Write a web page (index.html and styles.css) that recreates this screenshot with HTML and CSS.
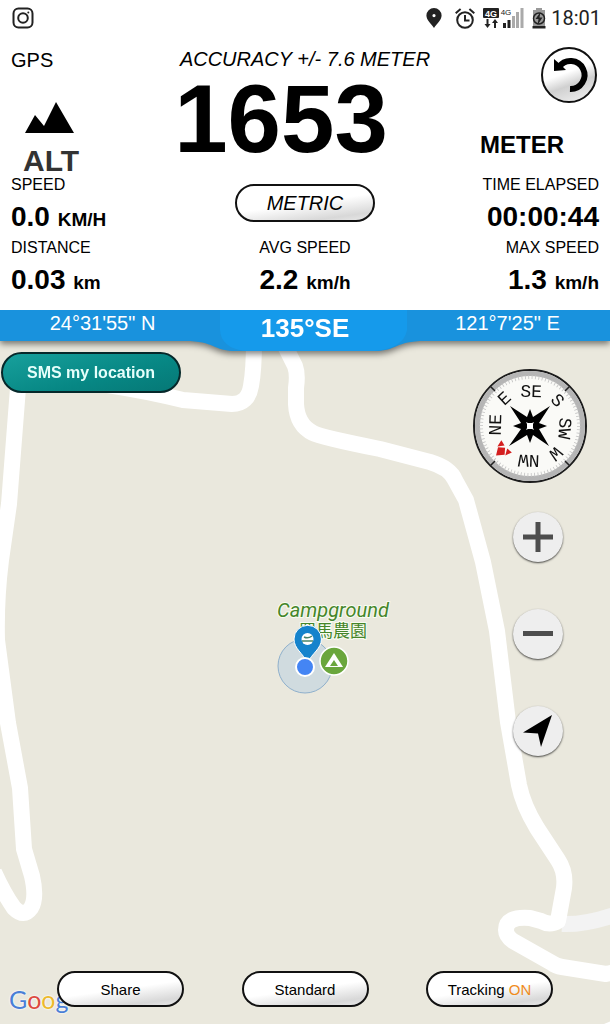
FILE: index.html
```html
<!DOCTYPE html>
<html lang="en">
<head>
  <meta charset="UTF-8">
  <meta name="viewport" content="width=device-width, initial-scale=1">
  <title>GPS Altimeter</title>
  <link rel="stylesheet" href="styles.css">
</head>
<body>

  <!-- Status bar -->
  <header class="status-bar">
    <svg width="22" height="22" viewBox="0 0 22 22" fill="none" stroke="#222" stroke-width="2">
      <rect x="1.5" y="1.5" width="19" height="19" rx="5"/>
      <circle cx="11" cy="11" r="4.8"/>
      <circle cx="16.3" cy="5.6" r="1" fill="#222" stroke="none"/>
    </svg>
    <div class="status-icons">
      <svg width="16" height="20" viewBox="0 0 16 20">
        <path fill="#222" fill-rule="evenodd" d="M8 0a7.6 7.6 0 0 0-7.6 7.6C.4 12 5 15.500 8 20c3-4.500 7.600-8 7.600-12.400A7.600 7.600 0 0 0 8 0zm0 6a1.600 1.600 0 1 1 0 3.200A1.600 1.600 0 0 1 8 6z"/>
      </svg>
      <svg width="20" height="21" viewBox="0 0 20 21" fill="none" stroke="#222" stroke-width="2">
        <circle cx="10" cy="12" r="7.800"/>
        <path d="M10 7v5.500h4.500M.7 5.200L5.600 1M19.300 5.200L14.400 1"/>
      </svg>
      <svg width="41" height="21" viewBox="0 0 41 21">
        <rect width="16" height="10" rx="1" fill="#222"/>
        <text x="8" y="9" class="net-label" fill="#fff">4G</text>
        <path fill="#222" d="M3.500 11h2v5h2l-3 4-3-4h2zM11 20h2v-5h2l-3-4-3 4h2z"/>
        <text x="23" y="7" class="net-small" fill="#222">4G</text>
        <path fill="#222" d="M20 15h3v5h-3zM24.500 12h3v8h-3z"/>
        <path fill="#aaa" d="M29 8h3v12h-3zM33 4h3v16h-3zM37.500 0h3v20h-3z"/>
      </svg>
      <svg width="14" height="21" viewBox="0 0 14 21">
        <path fill="#999" d="M4 0h6v2h3v17H1V2h3z"/>
        <path fill="#222" d="M.5 18h13v2.500H.5z"/>
        <circle cx="7" cy="10.500" r="5.500" fill="none" stroke="#222" stroke-width="1.500"/>
        <path fill="#222" d="M8.500 4L3.500 11h3L5.500 17l5-7.500h-3z"/>
      </svg>
      <time>18:01</time>
    </div>
  </header>

  <main>
    <!-- Altitude -->
    <section class="altitude">
      <div class="altitude-source">
        <span class="caption">GPS</span>
        <svg class="mountain" width="50" height="31" viewBox="0 0 50 31">
          <path d="M0 31L10 13l9 11L31 0l18 31z"/>
        </svg>
        <strong class="alt-label">ALT</strong>
      </div>
      <div class="altitude-value">
        <em class="caption">ACCURACY +/- 7.6 METER</em>
        <strong class="big-number">1653</strong>
      </div>
      <div class="altitude-unit">
        <button type="button" class="reset-btn" aria-label="Reset">
          <svg width="52" height="52" viewBox="2 2 52 52">
            <path d="M18 20A14 14 0 1 1 29 42" fill="none" stroke="#000" stroke-width="6"/>
            <path d="M13 12v12l12-1-5-5z"/>
          </svg>
        </button>
        <strong class="unit-label">METER</strong>
      </div>
    </section>

    <!-- Trip stats -->
    <section class="stats">
      <div class="stat">
        <span class="stat-label">SPEED</span>
        <strong class="stat-value">0.0 <small>KM/H</small></strong>
      </div>
      <button type="button" class="pill metric-btn">METRIC</button>
      <div class="stat right">
        <span class="stat-label">TIME ELAPSED</span>
        <strong class="stat-value">00:00:44</strong>
      </div>
      <div class="stat">
        <span class="stat-label">DISTANCE</span>
        <strong class="stat-value">0.03 <small>km</small></strong>
      </div>
      <div class="stat center">
        <span class="stat-label">AVG SPEED</span>
        <strong class="stat-value">2.2 <small>km/h</small></strong>
      </div>
      <div class="stat right">
        <span class="stat-label">MAX SPEED</span>
        <strong class="stat-value">1.3 <small>km/h</small></strong>
      </div>
    </section>

    <!-- Map -->
    <section class="map">
      <svg class="map-canvas" viewBox="0 310 610 714" preserveAspectRatio="xMidYMid slice">
        <path class="road minor" d="M562 924q22 1 52-9"/>
        <g class="road">
          <path d="M19 375L9 504L1 560Q-4 600-3 640L8 723L20 788L24 849L32 876Q37 898 31 908Q24 918 14 908Q4 894-6 872"/>
          <path d="M19 375Q110 382 183 400L232 404Q248 404 251 386Q254 370 254 340"/>
          <path d="M282 340L295 366Q298 374 296 388V404Q297 425 313 433Q320 437 380 449L430 462Q450 468 455 480L466 500L483 562L497 631L508 722L519 785Q523 805 537 828L558 860Q566 872 564 888L558 921Q550 926 541 921L530 918Q506 916 506 930Q506 936 513 941L552 963Q556 966 562 967L606 974L620 971"/>
          <path d="M596 1036L620 1026"/>
        </g>
        <circle cx="305" cy="666" r="27" class="accuracy"/>
        <text x="333" y="617" class="place">Campground</text>
        <text x="333" y="637" class="place-cjk">羅馬農園</text>
        <circle cx="334" cy="661" r="14" fill="#6aa63c" stroke="#fff" stroke-width="1.500"/>
        <path d="M334 653l9 14h-18z" fill="#fff"/>
        <path d="M334 660l4 6h-8z" fill="#6aa63c"/>
        <path d="M307.500 663C303 653 294 649 294 639a13.700 13.700 0 0 1 27.400 0C321.400 649 312 653 307.500 663z" fill="#1583cc" stroke="#fff" stroke-width="1"/>
        <circle cx="307.500" cy="639" r="6" fill="#fff"/>
        <path d="M304 637q4 2 8-1M302 641h11" fill="none" stroke="#49856a" stroke-width="1.500"/>
        <circle cx="305" cy="667" r="9" fill="#4485f4" stroke="#fff" stroke-width="2"/>
      </svg>

      <div class="heading-bar">
        <svg class="heading-tab" width="240" height="42" viewBox="0 0 240 42">
          <path fill="#1992dd" d="M0 0h240v31c-30 0-28 10-50 10H50C28 41 30 31 0 31z"/>
          <path fill="#159aeb" d="M35 0h187v20q-3 18-32 21H60Q36 38 35 20z"/>
        </svg>
        <span class="coord">24°31'55" N</span>
        <strong class="heading">135°SE</strong>
        <span class="coord">121°7'25" E</span>
      </div>

      <div class="map-body">
        <button type="button" class="sms-btn">SMS my location</button>
        <div class="map-tools">
          <svg class="compass" width="114" height="114" viewBox="-57 -57 114 114">
            <circle r="56" fill="#fafaf7" stroke="#1c1c1c" stroke-width="2"/>
            <circle r="52.500" fill="none" stroke="#b5b5b5" stroke-width="5"/>
            <circle r="49" fill="none" stroke="#c4c4c4" stroke-width="4" pathLength="360" stroke-dasharray="1 3"/>
            <path stroke="#222" stroke-width="1.500" d="M-40-40l5 5M40-40l-5 5M40 40l-5-5M-40 40l5-5"/>
            <g class="compass-text">
              <text y="-29" transform="rotate(2)">SE</text>
              <text y="-32" transform="rotate(47)">S</text>
              <text y="-29" transform="rotate(94)">SW</text>
              <text y="-32" transform="rotate(137)">W</text>
              <text y="-29" transform="rotate(182)">NW</text>
              <text y="-29" transform="rotate(272)">NE</text>
              <text y="-32" transform="rotate(317)">E</text>
            </g>
            <g transform="rotate(229)" fill="#d41f1f">
              <path d="M0-45l5 7-5 5-5-5zM-8-31l2-7 4 6zM8-31l-2-7-4 6z"/>
            </g>
            <path d="M0-17L3-9L20-20L9-3L17 0L9 3L19 20L3 9L0 17L-3 9L-21 20L-9 3L-17 0L-9-3L-20-20L-3-9z"/>
            <path fill="#fff" d="M-4-4l2 1h4l2-1-1 2v4l1 2-2-1h-4l-2 1 1-2v-4z"/>
          </svg>
          <div class="round-btns">
            <button type="button" class="round-btn" aria-label="Zoom in">
              <svg width="30" height="30" viewBox="0 0 30 30"><path fill="#4d4d4d" d="M12.500 0h5v12.500H30v5H17.500V30h-5V17.500H0v-5h12.500z"/></svg>
            </button>
            <button type="button" class="round-btn" aria-label="Zoom out">
              <svg width="30" height="30" viewBox="0 0 30 30"><path fill="#4d4d4d" d="M0 12h30v5H0z"/></svg>
            </button>
            <button type="button" class="round-btn" aria-label="My position">
              <svg width="30" height="34" viewBox="0 0 30 34"><path d="M29 1L18 33l-3-13.500L0 18.500z"/></svg>
            </button>
          </div>
        </div>
      </div>

      <span class="google" aria-label="Google"><i class="b">G</i><i class="r">o</i><i class="y">o</i><i class="b">g</i></span>
      <nav class="map-actions">
        <button type="button" class="pill">Share</button>
        <button type="button" class="pill">Standard</button>
        <button type="button" class="pill">Tracking <span class="on">ON</span></button>
      </nav>
    </section>
  </main>

</body>
</html>
```
FILE: styles.css
```css
* {
  box-sizing: border-box;
}

body {
  margin: 0;
  min-height: 100vh;
  display: flex;
  flex-direction: column;
  font-family: "Liberation Sans", Arial, sans-serif;
  background: #fff;
  color: #000;
}

main {
  flex: 1;
  display: flex;
  flex-direction: column;
}

button {
  font-family: inherit;
  padding: 0;
  cursor: pointer;
}

svg {
  display: block;
}

/* Status bar */
.status-bar {
  display: flex;
  justify-content: space-between;
  align-items: center;
  height: 36px;
  padding: 0 9px 0 12px;
}

.status-icons {
  display: flex;
  align-items: center;
  gap: 8px;
}

.status-icons svg:first-child {
  margin-right: 5px;
}

.status-icons time {
  font: 20px/24px Roboto, sans-serif;
  color: #222;
  margin-left: -3px;
}

.net-label {
  font: bold 9px "Liberation Sans", sans-serif;
  text-anchor: middle;
}

.net-small {
  font: 8px "Liberation Sans", sans-serif;
  text-anchor: middle;
}

/* Altitude */
.altitude {
  display: grid;
  grid-template-columns: 1fr auto 1fr;
  padding: 0 11px;
}

.caption {
  font-size: 20px;
  line-height: 20px;
}

.altitude-source {
  display: flex;
  flex-direction: column;
  align-items: flex-start;
  padding-top: 14px;
}

.mountain {
  margin: 32px 0 15px 14px;
}

.alt-label {
  margin-left: 12px;
  font-size: 30px;
  line-height: 26px;
  color: #333;
}

.altitude-value {
  display: flex;
  flex-direction: column;
  align-items: center;
  padding-top: 13px;
}

.big-number {
  padding-right: 48px;
  font-size: 96px;
  line-height: 100px;
}

.altitude-unit {
  display: flex;
  flex-direction: column;
  align-items: flex-end;
  padding-top: 11px;
}

.reset-btn {
  width: 56px;
  height: 56px;
  margin-right: 2px;
  border: 2px solid #111;
  border-radius: 50%;
  background: linear-gradient(160deg, #fff 45%, #d0d0d0 65%, #f4f4f4);
}

.unit-label {
  margin: 28px 35px 0 0;
  font-size: 24px;
  line-height: 28px;
}

/* Trip stats */
.stats {
  display: grid;
  grid-template-columns: 1fr auto 1fr;
  padding: 1px 11px 9px;
}

.stat {
  display: flex;
  flex-direction: column;
}

.stat.center {
  align-items: center;
}

.stat.right {
  align-items: flex-end;
}

.stat-label {
  font-size: 16px;
  line-height: 20px;
}

.stat-value {
  font-size: 28px;
  line-height: 43px;
}

.stat-value small {
  font-size: 19px;
  line-height: 1;
}

.pill {
  width: 127px;
  height: 36px;
  border: 2px solid #111;
  border-radius: 18px;
  background: linear-gradient(172deg, #fff 50%, #d8d8d8 85%, #e8e8e8);
  color: #000;
  font-size: 15px;
}

.metric-btn {
  width: 140px;
  height: 38px;
  margin-top: 9px;
  font-size: 20px;
  font-style: italic;
  border-radius: 19px;
}

/* Map */
.map {
  position: relative;
  flex: 1;
  display: flex;
  flex-direction: column;
  overflow: hidden;
  background: #eae8dd;
}

.map-canvas {
  position: absolute;
  inset: 0;
  width: 100%;
  height: 100%;
}

.road {
  fill: none;
  stroke: #fff;
  stroke-width: 16px;
  stroke-linejoin: round;
}

.road.minor {
  stroke: #f3f3f3;
}

.accuracy {
  fill: rgba(160, 195, 225, 0.35);
  stroke: #8fb0cc;
}

.place,
.place-cjk {
  text-anchor: middle;
  fill: #45852a;
  stroke: #f8fcf0;
  stroke-width: 2px;
  paint-order: stroke;
}

.place {
  font: italic 20px Roboto, sans-serif;
}

.place-cjk {
  font: 17px "Noto Sans CJK TC", sans-serif;
}

/* Heading and coordinates */
.heading-bar {
  position: relative;
  display: grid;
  grid-template-columns: 1fr 200px 1fr;
  justify-items: center;
  height: 42px;
  background: linear-gradient(#1992dd, #1992dd) top / 100% 31px no-repeat;
  color: #fff;
  filter: drop-shadow(0 3px 3px rgba(0, 0, 0, 0.5));
}

.heading-tab {
  position: absolute;
  top: 0;
  left: 50%;
  margin-left: -120px;
}

.coord {
  font-size: 20px;
  line-height: 26px;
}

.heading {
  position: relative;
  font-size: 26px;
  line-height: 36px;
}

/* Buttons over the map */
.map-body {
  position: relative;
  display: flex;
  justify-content: space-between;
  align-items: flex-start;
  padding-right: 23px;
}

.sms-btn {
  width: 180px;
  height: 41px;
  margin-left: 1px;
  border: 2px solid #06282a;
  border-radius: 21px;
  background: linear-gradient(165deg, #17a09c, #078784 60%, #067876);
  color: #e6fffb;
  font-size: 16px;
  font-weight: bold;
}

.map-tools {
  display: flex;
  flex-direction: column;
  align-items: flex-end;
  gap: 29px;
  padding-top: 17px;
}

.round-btns {
  display: flex;
  flex-direction: column;
  gap: 47px;
  margin-right: 24px;
}

.round-btn {
  display: flex;
  align-items: center;
  justify-content: center;
  width: 50px;
  height: 50px;
  border: none;
  border-radius: 50%;
  background: #eee;
  box-shadow: 0 1px 2px rgba(0, 0, 0, 0.7);
}

.compass-text {
  font: 18px "Liberation Mono", monospace;
  text-anchor: middle;
  fill: #111;
}

.google {
  position: absolute;
  left: 9px;
  bottom: 10px;
  font: 25px/30px Lato, sans-serif;
  text-shadow: 0 0 2px #fff, 0 0 2px #fff;
}

.google i {
  font-style: normal;
}

.google .b {
  color: #4a7fd6;
}

.google .r {
  color: #dc4a40;
}

.google .y {
  color: #ecb92c;
}

.map-actions {
  position: relative;
  display: flex;
  justify-content: space-between;
  margin-top: auto;
  padding: 20px 57px 17px;
}

.on {
  color: #f08c1e;
}
```
